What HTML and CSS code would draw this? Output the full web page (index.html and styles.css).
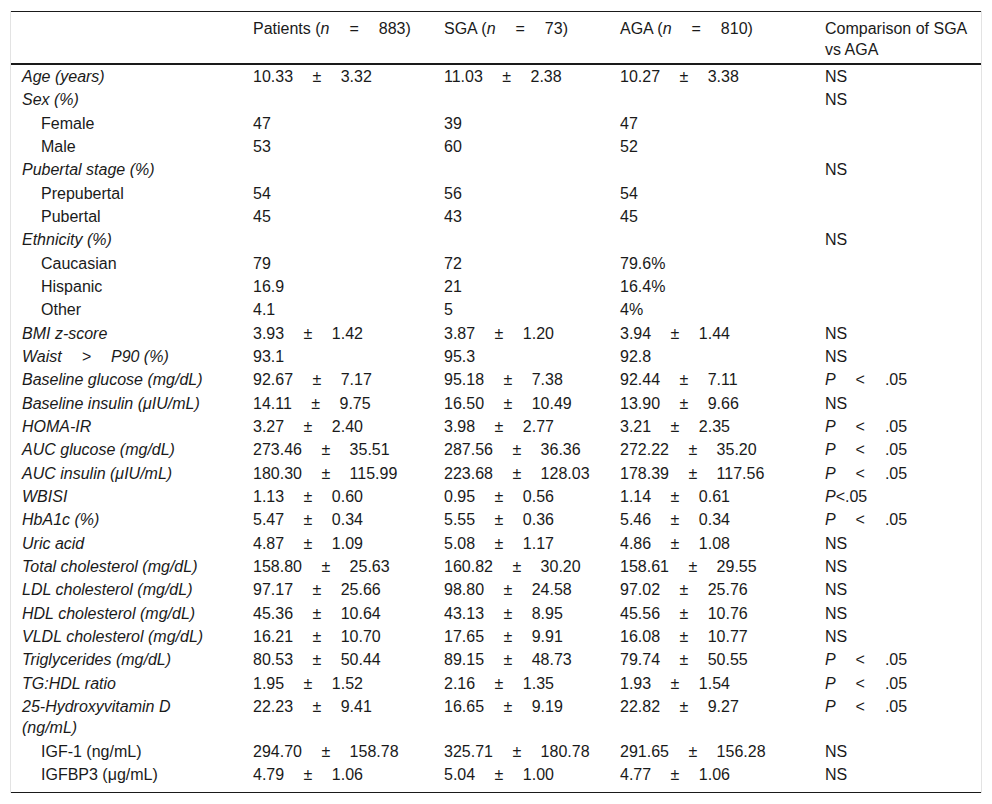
FILE: index.html
```html
<!DOCTYPE html>
<html lang="en">
<head>
<meta charset="utf-8">
<title>Table</title>
<link rel="stylesheet" href="styles.css">
</head>
<body>
<div class="frame">
<table class="tbl">
<colgroup>
<col class="c1"><col class="c2"><col class="c3"><col class="c4"><col class="c5">
</colgroup>
<thead>
<tr>
<th></th>
<th>Patients (<span class="eq"><i>n</i> = 883</span>)</th>
<th>SGA (<span class="eq"><i>n</i> = 73</span>)</th>
<th>AGA (<span class="eq"><i>n</i> = 810</span>)</th>
<th>Comparison of SGA vs AGA</th>
</tr>
</thead>
<tbody>
<tr><td class="lab">Age (years)</td><td class="v">10.33 ± 3.32</td><td class="v">11.03 ± 2.38</td><td class="v">10.27 ± 3.38</td><td>NS</td></tr>
<tr><td class="lab">Sex (%)</td><td></td><td></td><td></td><td>NS</td></tr>
<tr><td class="sub">Female</td><td>47</td><td>39</td><td>47</td><td></td></tr>
<tr><td class="sub">Male</td><td>53</td><td>60</td><td>52</td><td></td></tr>
<tr><td class="lab">Pubertal stage (%)</td><td></td><td></td><td></td><td>NS</td></tr>
<tr><td class="sub">Prepubertal</td><td>54</td><td>56</td><td>54</td><td></td></tr>
<tr><td class="sub">Pubertal</td><td>45</td><td>43</td><td>45</td><td></td></tr>
<tr><td class="lab">Ethnicity (%)</td><td></td><td></td><td></td><td>NS</td></tr>
<tr><td class="sub">Caucasian</td><td>79</td><td>72</td><td>79.6%</td><td></td></tr>
<tr><td class="sub">Hispanic</td><td>16.9</td><td>21</td><td>16.4%</td><td></td></tr>
<tr><td class="sub">Other</td><td>4.1</td><td>5</td><td>4%</td><td></td></tr>
<tr><td class="lab">BMI z-score</td><td class="v">3.93 ± 1.42</td><td class="v">3.87 ± 1.20</td><td class="v">3.94 ± 1.44</td><td>NS</td></tr>
<tr><td class="lab">Waist<span class="eq"> &gt; </span>P90 (%)</td><td>93.1</td><td>95.3</td><td>92.8</td><td>NS</td></tr>
<tr><td class="lab">Baseline glucose (mg/dL)</td><td class="v">92.67 ± 7.17</td><td class="v">95.18 ± 7.38</td><td class="v">92.44 ± 7.11</td><td class="eq"><i>P</i> &lt; .05</td></tr>
<tr><td class="lab">Baseline insulin (μIU/mL)</td><td class="v">14.11 ± 9.75</td><td class="v">16.50 ± 10.49</td><td class="v">13.90 ± 9.66</td><td>NS</td></tr>
<tr><td class="lab">HOMA-IR</td><td class="v">3.27 ± 2.40</td><td class="v">3.98 ± 2.77</td><td class="v">3.21 ± 2.35</td><td class="eq"><i>P</i> &lt; .05</td></tr>
<tr><td class="lab">AUC glucose (mg/dL)</td><td class="v">273.46 ± 35.51</td><td class="v">287.56 ± 36.36</td><td class="v">272.22 ± 35.20</td><td class="eq"><i>P</i> &lt; .05</td></tr>
<tr><td class="lab">AUC insulin (μIU/mL)</td><td class="v">180.30 ± 115.99</td><td class="v">223.68 ± 128.03</td><td class="v">178.39 ± 117.56</td><td class="eq"><i>P</i> &lt; .05</td></tr>
<tr><td class="lab">WBISI</td><td class="v">1.13 ± 0.60</td><td class="v">0.95 ± 0.56</td><td class="v">1.14 ± 0.61</td><td><i>P</i>&lt;.05</td></tr>
<tr><td class="lab">HbA1c (%)</td><td class="v">5.47 ± 0.34</td><td class="v">5.55 ± 0.36</td><td class="v">5.46 ± 0.34</td><td class="eq"><i>P</i> &lt; .05</td></tr>
<tr><td class="lab">Uric acid</td><td class="v">4.87 ± 1.09</td><td class="v">5.08 ± 1.17</td><td class="v">4.86 ± 1.08</td><td>NS</td></tr>
<tr><td class="lab">Total cholesterol (mg/dL)</td><td class="v">158.80 ± 25.63</td><td class="v">160.82 ± 30.20</td><td class="v">158.61 ± 29.55</td><td>NS</td></tr>
<tr><td class="lab">LDL cholesterol (mg/dL)</td><td class="v">97.17 ± 25.66</td><td class="v">98.80 ± 24.58</td><td class="v">97.02 ± 25.76</td><td>NS</td></tr>
<tr><td class="lab">HDL cholesterol (mg/dL)</td><td class="v">45.36 ± 10.64</td><td class="v">43.13 ± 8.95</td><td class="v">45.56 ± 10.76</td><td>NS</td></tr>
<tr><td class="lab">VLDL cholesterol (mg/dL)</td><td class="v">16.21 ± 10.70</td><td class="v">17.65 ± 9.91</td><td class="v">16.08 ± 10.77</td><td>NS</td></tr>
<tr><td class="lab">Triglycerides (mg/dL)</td><td class="v">80.53 ± 50.44</td><td class="v">89.15 ± 48.73</td><td class="v">79.74 ± 50.55</td><td class="eq"><i>P</i> &lt; .05</td></tr>
<tr><td class="lab">TG:HDL ratio</td><td class="v">1.95 ± 1.52</td><td class="v">2.16 ± 1.35</td><td class="v">1.93 ± 1.54</td><td class="eq"><i>P</i> &lt; .05</td></tr>
<tr><td class="lab">25-Hydroxyvitamin D (ng/mL)</td><td class="v">22.23 ± 9.41</td><td class="v">16.65 ± 9.19</td><td class="v">22.82 ± 9.27</td><td class="eq"><i>P</i> &lt; .05</td></tr>
<tr><td class="sub">IGF-1 (ng/mL)</td><td class="v">294.70 ± 158.78</td><td class="v">325.71 ± 180.78</td><td class="v">291.65 ± 156.28</td><td>NS</td></tr>
<tr class="last"><td class="sub">IGFBP3 (μg/mL)</td><td class="v">4.79 ± 1.06</td><td class="v">5.04 ± 1.00</td><td class="v">4.77 ± 1.06</td><td>NS</td></tr>
</tbody>
</table>
</div>
</body>
</html>
```

FILE: styles.css
```css
html, body {
  margin: 0;
  padding: 0;
  background: #ffffff;
}

body {
  font-family: "Liberation Sans", Arial, sans-serif;
  font-size: 16px;
  color: #1a1a1a;
}

.frame {
  margin: 11px 10px 0 10px;
  border-left: 1px solid #e3e3e3;
  border-right: 1px solid #e3e3e3;
}

.tbl {
  width: 100%;
  border-collapse: collapse;
  table-layout: fixed;
  border-top: 1px solid #1a1a1a;
  border-bottom: 1.5px solid #1a1a1a;
}

.c1 { width: 231px; }
.c2 { width: 191px; }
.c3 { width: 176px; }
.c4 { width: 205px; }
.c5 { width: auto; }

th {
  font-weight: normal;
  text-align: left;
  vertical-align: top;
  padding: 6px 11px 2px 11px;
  line-height: 21.4px;
  border-bottom: 2px solid #1a1a1a;
}

td {
  text-align: left;
  vertical-align: top;
  padding: 1px 11px;
  line-height: 21.34px;
}

.lab {
  font-style: italic;
  padding-right: 16px;
}

.sub {
  padding-left: 30px;
}

.v {
  word-spacing: 15px;
}

.eq {
  word-spacing: 15.5px;
}

.last td {
  padding-bottom: 7px;
}
```
